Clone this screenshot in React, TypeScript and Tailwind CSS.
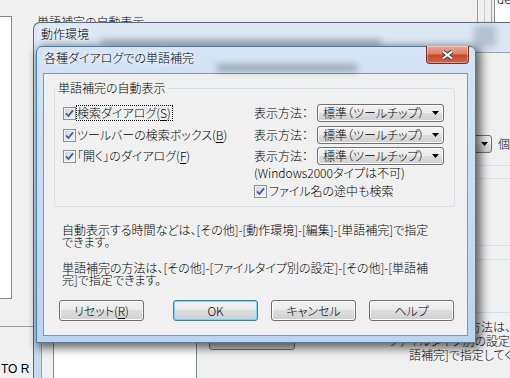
import type { ReactNode } from "react";

const BTN_BG = "bg-[linear-gradient(#f2f2f2,#ebebeb_50%,#dddddd_50%,#cfcfcf)]";

function CheckBox() {
  return (
    <span className="flex h-[13px] w-[13px] shrink-0 items-center justify-center border border-[#8e8f8f] bg-[linear-gradient(135deg,#cdd1d7,#f7f7f7)] shadow-[inset_0_0_0_1px_#f4f4f4]">
      <svg width="9" height="9" viewBox="0 0 9 9">
        <path d="M1 4.4 L3.4 7 L8 1.4" fill="none" stroke="#3c5898" strokeWidth="1.7" />
      </svg>
    </span>
  );
}

function Combo() {
  return (
    <div className={`flex h-[18px] w-[127px] items-center rounded-[3px] border border-[#707070] ${BTN_BG} pl-[5px] pr-[4px] shadow-[inset_0_0_0_1px_#fcfcfc]`}>
      <span className="flex-1 whitespace-nowrap leading-[14px]">標準（ツールチップ）</span>
      <svg width="7" height="4" viewBox="0 0 7 4">
        <path d="M0 0 H7 L3.5 4 Z" fill="#000" />
      </svg>
    </div>
  );
}

function Btn({ children, def }: { children: ReactNode; def?: boolean }) {
  return (
    <div
      className={`flex h-[21px] w-[85px] shrink-0 items-center justify-center rounded-[3px] border leading-[14px] ${BTN_BG} ${
        def ? "border-[#3c7fb1] shadow-[inset_0_0_0_1px_#7fd4f5]" : "border-[#707070] shadow-[inset_0_0_0_1px_#fcfcfc]"
      }`}
    >
      {children}
    </div>
  );
}

export default function App() {
  return (
    <div className="relative h-[378px] w-[510px] overflow-hidden bg-[#f0f0f0] font-['Noto_Sans_CJK_JP','Liberation_Sans',sans-serif] text-[12px] font-light text-black [font-feature-settings:'palt']">
      {/* window underneath everything */}
      <div className="absolute left-0 top-[16px] h-[283px] w-[12px] border-y border-r border-[#828790] bg-white" />
      <div className="absolute left-[37px] top-[15px] whitespace-nowrap leading-[14px]">単語補完の自動表示</div>
      <div className="absolute left-[477px] top-0 h-[22px] w-px bg-[#a0a0a0]" />
      <div className="absolute left-[484px] top-0 h-[22px] w-px bg-[#c8c8c8]" />
      <div className="absolute left-[491px] top-0 h-[22px] w-px bg-[#a0a0a0]" />
      <div className="absolute left-[494px] top-[-10px] h-[32px] w-[20px] border-l border-[#828790] bg-white pl-[2px] pt-[2px] leading-[14px]">de</div>
      <div className="absolute left-0 top-[326px] h-px w-[33px] bg-[#a0a0a0]" />
      <div className="absolute left-[1px] top-[362px] whitespace-nowrap font-['Liberation_Sans',sans-serif] font-normal leading-[14px]">TO R</div>

      {/* 動作環境 window */}
      <div className="absolute left-[33px] top-[22px] h-[380px] w-[500px] rounded-tl-[7px] border-l border-t border-[#56687c] bg-[linear-gradient(#dde8f4,#c4d7ec)]">
        <div className="absolute left-[67px] top-[16px] h-[6px] w-[280px] bg-black/25 blur-[3px]" />
        <div className="absolute left-[440px] top-[2px] h-[22px] w-[22px] bg-[#8c9cb0]/50 blur-[3px]" />
        <div className="relative pl-[7px] pt-[3px] leading-[16px] [text-shadow:0_0_6px_#fff,0_0_6px_#fff]">動作環境</div>
        <div className="absolute bottom-0 left-[7px] right-0 top-[29px] border border-[#8ea2b8] bg-[#f0f0f0]" />
      </div>

      {/* visible bits of the 動作環境 client area */}
      <div className={`absolute left-[458px] top-[135px] flex h-[18px] w-[34px] items-center justify-end rounded-[3px] border border-[#707070] ${BTN_BG} pr-[3px]`}>
        <svg width="7" height="4" viewBox="0 0 7 4">
          <path d="M0 0 H7 L3.5 4 Z" fill="#000" />
        </svg>
      </div>
      <div className="absolute left-[498px] top-[137px] leading-[14px]">個</div>
      <div className="absolute left-[460px] top-[165px] h-px w-[60px] bg-[#d5dfe5]" />
      <div className="absolute left-[460px] top-[178px] h-px w-[60px] bg-[#d5dfe5]" />
      <div className="absolute left-[460px] top-[245px] h-px w-[60px] bg-[#d5dfe5]" />
      <div className="absolute left-[460px] top-[259px] h-px w-[60px] bg-[#d5dfe5]" />
      <div className="absolute left-[460px] top-[312px] h-px w-[60px] bg-[#d5dfe5]" />
      <div className="absolute left-[53px] top-[320px] h-[80px] w-[144px] border border-[#828790] bg-white" />
      <div className={`absolute left-[209px] top-[320px] h-[30px] w-[86px] rounded-b-[3px] border border-[#707070] ${BTN_BG}`} />
      <div className="absolute right-[-1px] top-[320px] whitespace-nowrap leading-[14px]">単語補完の方法は、</div>
      <div className="absolute right-[0px] top-[334px] whitespace-nowrap leading-[14px]">ファイルタイプ別の設定</div>
      <div className="absolute left-[409px] top-[348px] whitespace-nowrap leading-[14px]">語補完]で指定してください</div>

      {/* 各種ダイアログでの単語補完 dialog */}
      <div className="absolute left-[36px] top-[46px] flex h-[297px] w-[440px] flex-col rounded-t-[6px] border border-[#3f7fb3] bg-[linear-gradient(#d4e4f5,#bcd3ec)] pb-[6px] pl-[6px] pr-[7px] shadow-[3px_3px_10px_2px_rgba(0,0,0,0.6)]">
        <div className="absolute left-[180px] top-[17px] h-[8px] w-[140px] bg-black/25 blur-[3px]" />
        <div className="relative h-[26px] shrink-0 pl-[1px] pt-[3px] leading-[16px] [text-shadow:0_0_6px_#fff,0_0_6px_#fff]">
          各種ダイアログでの単語補完
        </div>
        <div className="absolute right-[6px] top-[-1px] flex h-[18px] w-[43px] items-center justify-center rounded-b-[4px] border border-t-0 border-[#7a2e22] bg-[linear-gradient(#eaab9c,#d98068_45%,#c6492f_55%,#d2654d)] shadow-[inset_0_0_0_1px_rgba(255,255,255,0.35)]">
          <svg width="13" height="10" viewBox="0 0 13 10">
            <path d="M2 1.5 L11 8.5 M11 1.5 L2 8.5" stroke="#3a3a3a" strokeWidth="4" />
            <path d="M2 1.5 L11 8.5 M11 1.5 L2 8.5" stroke="#fff" strokeWidth="2.2" />
          </svg>
        </div>

        <div className="flex flex-1 flex-col border border-[#8497af] bg-[#f0f0f0]">
          <fieldset className="ml-[10px] mt-[7px] w-[401px] rounded-[3px] border border-[#d5dfe5] pb-[8px] pt-[9px]">
            <legend className="ml-[1px] px-[2px] leading-[14px]">単語補完の自動表示</legend>
            <div className="flex flex-col pl-[8px]">
              <div className="flex h-[18px] items-center">
                <div className="flex w-[191px] items-center">
                  <CheckBox />
                  <span className="border border-dotted border-black pr-[1px] leading-[14px]">
                    検索ダイアログ(<span className="underline underline-offset-2">S</span>)
                  </span>
                </div>
                <span className="w-[63px] whitespace-nowrap">表示方法：</span>
                <Combo />
              </div>
              <div className="mt-[4px] flex h-[18px] items-center">
                <div className="flex w-[191px] items-center">
                  <CheckBox />
                  <span className="ml-[1px] whitespace-nowrap leading-[14px]">
                    ツールバーの検索ボックス(<span className="underline underline-offset-2">B</span>)
                  </span>
                </div>
                <span className="w-[63px] whitespace-nowrap">表示方法：</span>
                <Combo />
              </div>
              <div className="mt-[3px] flex h-[18px] items-center">
                <div className="flex w-[191px] items-center">
                  <CheckBox />
                  <span className="ml-[1px] whitespace-nowrap leading-[14px]">
                    「開く」のダイアログ(<span className="underline underline-offset-2">F</span>)
                  </span>
                </div>
                <span className="w-[63px] whitespace-nowrap">表示方法：</span>
                <Combo />
              </div>
              <div className="mt-[1px] h-[14px] whitespace-nowrap pl-[191px] leading-[14px]">(Windows2000タイプは不可)</div>
              <div className="mt-[4px] flex h-[14px] items-center pl-[191px]">
                <CheckBox />
                <span className="ml-[2px] whitespace-nowrap leading-[14px]">ファイル名の途中も検索</span>
              </div>
            </div>
          </fieldset>

          <div className="ml-[18px] mt-[17px] whitespace-nowrap leading-[12px]">
            <p>自動表示する時間などは、[その他]-[動作環境]-[編集]-[単語補完]で指定</p>
            <p>できます。</p>
            <p className="mt-[14px]">単語補完の方法は、[その他]-[ファイルタイプ別の設定]-[その他]-[単語補</p>
            <p>完]で指定できます。</p>
          </div>

          <div className="mt-[14px] flex pl-[15px] pr-[13px]">
            <Btn>
              リセット(<span className="underline underline-offset-2">R</span>)
            </Btn>
            <div className="ml-auto flex gap-[13px]">
              <Btn def>OK</Btn>
              <Btn>キャンセル</Btn>
              <Btn>ヘルプ</Btn>
            </div>
          </div>
        </div>
      </div>
    </div>
  );
}
